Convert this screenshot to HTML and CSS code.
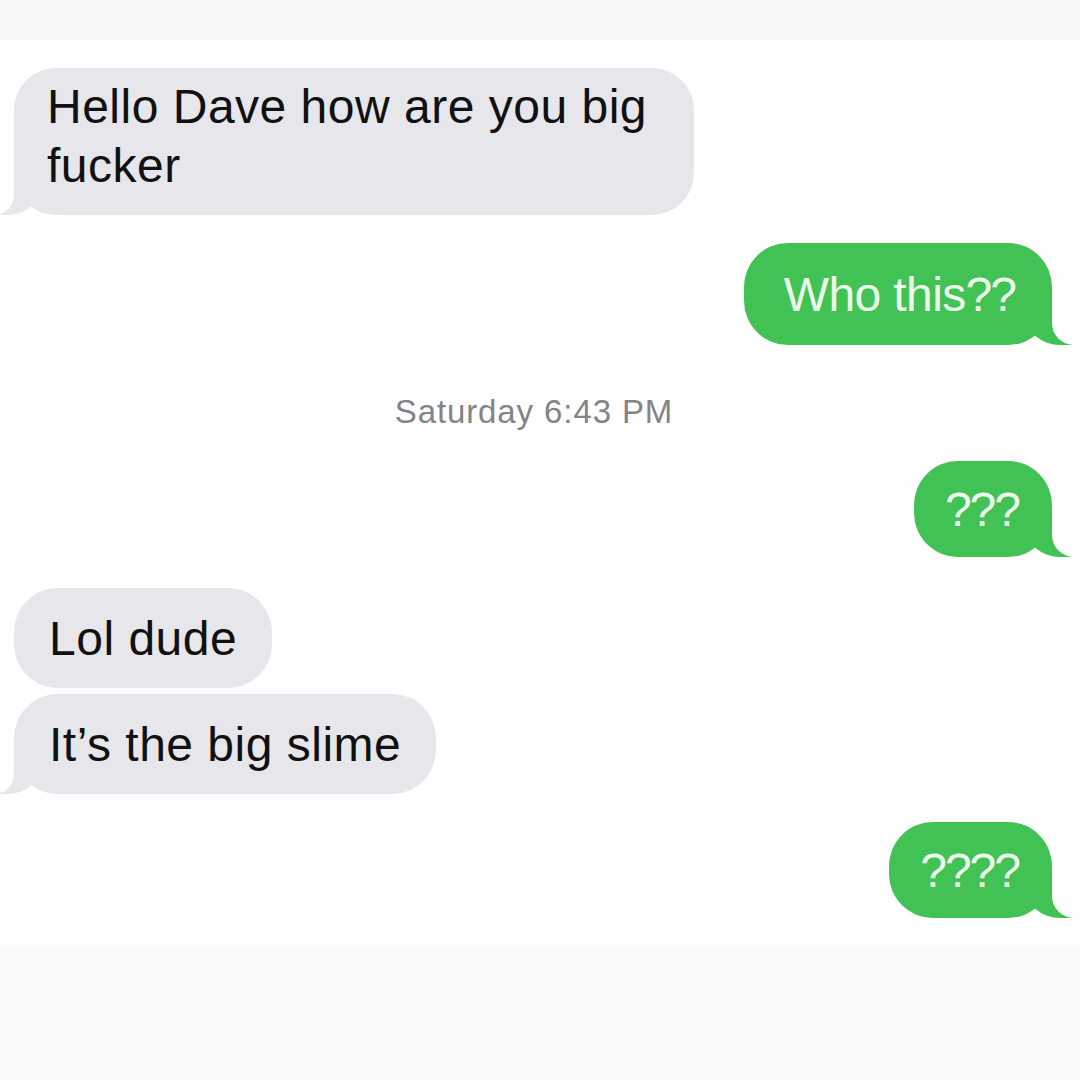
FILE: index.html
```html
<!DOCTYPE html>
<html lang="en">
<head>
<meta charset="utf-8">
<title>Messages</title>
<link rel="stylesheet" href="styles.css">
</head>
<body>
<div class="band band-top"></div>
<main class="thread">
  <div class="msg in tail wrap first">Hello Dave how are you big fucker</div>
  <div class="msg out tail who">Who this<span class="q">??</span></div>
  <div class="stamp">Saturday 6:43 PM</div>
  <div class="msg out tail after-stamp"><span class="q">???</span></div>
  <div class="msg in lol">Lol dude</div>
  <div class="msg in tail grouped">It’s the big slime</div>
  <div class="msg out tail last"><span class="q">????</span></div>
</main>
<div class="band band-bottom"></div>
</body>
</html>
```
FILE: styles.css
```css
* { box-sizing: border-box; }
html, body { margin: 0; padding: 0; }
body {
  width: 1080px;
  height: 1080px;
  overflow: hidden;
  background: #fafafa;
  font-family: "Liberation Sans", Arial, Helvetica, sans-serif;
  display: flex;
  flex-direction: column;
}
.band-top { height: 40px; background: #f8f8f8; flex: none; }
.band-bottom { flex: 1; background: #fafafa; }

.thread {
  height: 905px;
  flex: none;
  background: #ffffff;
  display: flex;
  flex-direction: column;
  padding: 28px 28px 0 14px;
  overflow: hidden;
}

.msg {
  position: relative;
  font-size: 48px;
  line-height: 59px;
  border-radius: 44px;
  padding: 21px 35px 20px;
  max-width: 680px;
}
.msg.in {
  align-self: flex-start;
  background: #e6e6eb;
  color: #111111;
  letter-spacing: 0.5px;
}
.msg.out {
  align-self: flex-end;
  background: #42c255;
  color: #ecfdec;
  padding: 19px 33px 18px 31px;
}
.q { letter-spacing: -2px; }

.msg.wrap { width: 681px; padding: 9px 36px 20px 33px; border-radius: 42px; }

/* tails */
.msg.tail::before,
.msg.tail::after {
  content: "";
  position: absolute;
  bottom: 0;
  height: 50px;
}
.msg.in.tail::before {
  left: -14px;
  width: 40px;
  background: #e6e6eb;
  border-bottom-right-radius: 32px 28px;
}
.msg.in.tail::after {
  left: -52px;
  width: 52px;
  background: #ffffff;
  border-bottom-right-radius: 20px;
}
.msg.out.tail::before {
  right: -20px;
  width: 46px;
  background: #42c255;
  border-bottom-left-radius: 34px 30px;
}
.msg.out.tail::after {
  right: -58px;
  width: 58px;
  background: #ffffff;
  border-bottom-left-radius: 22px;
}

.msg.who {
  margin-top: 28px;
  padding: 22px 37px 21px 40px;
  letter-spacing: -0.6px;
}
.stamp {
  margin-top: 47px;
  align-self: center;
  font-size: 33px;
  line-height: 40px;
  color: #838388;
  letter-spacing: 0.9px;
  margin-left: 2px;
}
.after-stamp { margin-top: 29px; }
.lol { margin-top: 31px; }
.grouped { margin-top: 6px; }
.last { margin-top: 28px; }
```
